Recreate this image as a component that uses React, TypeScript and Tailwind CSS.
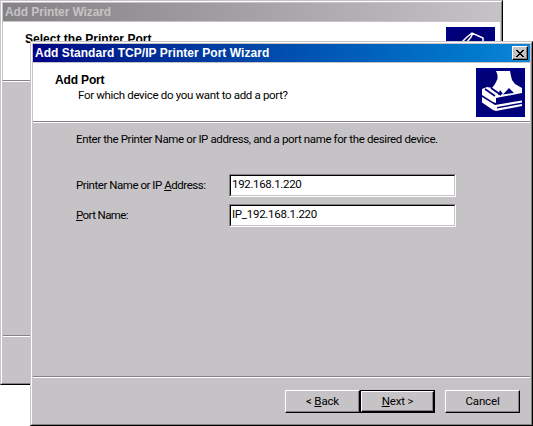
import React from "react";

type WindowProps = {
  title: string;
  heading: string;
  headingSpacing: string;
  titleSpacing: string;
  active?: boolean;
  icon: React.ReactNode;
  subtitle?: string;
  children?: React.ReactNode;
  footer?: React.ReactNode;
};

function StampIcon() {
  return (
    <svg width="49" height="49" viewBox="0 0 49 49" className="block">
      <defs>
        <pattern id="dots" width="2" height="2" patternUnits="userSpaceOnUse">
          <rect width="2" height="2" fill="#00007e" />
          <rect width="1" height="1" fill="#000066" />
        </pattern>
      </defs>
      <rect width="49" height="49" fill="#000084" />
      <rect x="3" y="3" width="43" height="43" fill="url(#dots)" />
      <path d="M20 3H34L35 8L36 12L39 16L46 20V25L20 30V35L17 34L6 27V21L11 19L16 20L19 16L21.5 11L21.5 7Z" fill="#fff" />
      <path d="M33 20L38 25L27 26.5Z M24 22L27 26L22 27Z" fill="#00007b" />
      <path d="M9 21L19 28M15 20L25 27" stroke="#00007b" strokeWidth="1.7" />
      <path d="M6 29L19 37L46 32.5V34.5L21 39V40.5L46 36V38L20 43L17 42L6 34.5Z" fill="#fff" />
    </svg>
  );
}

function PrinterIcon() {
  return (
    <svg width="49" height="49" viewBox="0 0 49 49" className="block">
      <rect width="49" height="49" fill="#000084" />
      <rect x="3" y="3" width="43" height="43" fill="url(#dots)" />
      <path d="M16 15L21 10L26 6L37 11V16M27 6L25 10L20 16" fill="none" stroke="#fff" strokeWidth="1.5" />
    </svg>
  );
}

function WizardWindow({ title, heading, headingSpacing, titleSpacing, active, icon, subtitle, children, footer }: WindowProps) {
  return (
    <div className="h-[385px] w-[503px] border border-t-[#c6c3c6] border-l-[#c6c3c6] border-r-black border-b-black bg-[#c6c3c6]">
      <div className="flex h-full flex-col border border-t-white border-l-white border-r-[#848284] border-b-[#848284] p-px">
        <div className={`flex h-[18px] shrink-0 items-center justify-between pr-0.5 pl-0.5 font-['Liberation_Sans',Arial,sans-serif] text-[12px] font-bold ${active ? "bg-linear-to-r from-[#000084] to-[#1086d6] text-white" : "bg-linear-to-r from-[#848284] to-[#c6c3c6] text-[#c6c3c6]"}`}>
          <span className={`whitespace-nowrap ${titleSpacing}`}>{title}</span>
          {active && (
            <button className="flex h-[14px] w-4 items-center justify-center border border-t-white border-l-white border-r-black border-b-black bg-[#c6c3c6] shadow-[inset_-1px_-1px_0_#848284]">
              <svg width="8" height="7" viewBox="0 0 8 7" shapeRendering="crispEdges">
                <path d="M0 0h2v1h1v1h2v-1h1v-1h2v1h-1v1h-1v1h-1v1h1v1h1v1h1v1h-2v-1h-1v-1h-2v1h-1v1h-2v-1h1v-1h1v-1h1v-1h-1v-1h-1v-1h-1z" fill="#000" />
              </svg>
            </button>
          )}
        </div>
        <div className="mt-px flex h-[58px] shrink-0 justify-between bg-white pt-[5px] pr-[5px] pl-[22px]">
          <div className="pt-[5px]">
            <div className={`h-[15px] font-['Liberation_Sans',Arial,sans-serif] text-[12px] leading-[15px] font-bold whitespace-nowrap ${headingSpacing}`}>{heading}</div>
            <div className="h-[15px] pl-[23px] leading-[15px] tracking-[-0.33px] whitespace-nowrap">{subtitle}</div>
          </div>
          {icon}
        </div>
        <div className="h-0.5 shrink-0 border-t border-b border-t-[#848284] border-b-white" />
        <div className="min-h-0 flex-1">{children}</div>
        <div className="h-0.5 shrink-0 border-t border-b border-t-[#848284] border-b-white" />
        <div className="flex h-[45px] shrink-0 pt-3 pl-[252px]">{footer}</div>
      </div>
    </div>
  );
}

function WizardButton({ children, primary, className = "" }: { children: React.ReactNode; primary?: boolean; className?: string }) {
  return (
    <button className={`h-[23px] w-[75px] tracking-[-0.15px] ${primary ? "border border-black leading-[18px]" : "leading-[20px]"} ${className}`}>
      <span className="block h-full border border-t-white border-l-white border-r-black border-b-black shadow-[inset_-1px_-1px_0_#848284]">{children}</span>
    </button>
  );
}

function Field({ label, value, labelSpacing, valueSpacing }: { label: React.ReactNode; value: string; labelSpacing: string; valueSpacing: string }) {
  return (
    <label className="flex h-[23px] items-center">
      <span className={`w-[153px] whitespace-nowrap ${labelSpacing}`}>{label}</span>
      <span className="h-[23px] w-[227px] border border-t-[#848284] border-l-[#848284] border-r-white border-b-white">
        <span className={`block h-full border border-t-black border-l-black border-r-[#c6c3c6] border-b-[#c6c3c6] bg-white pl-px leading-[17px] ${valueSpacing}`}>{value}</span>
      </span>
    </label>
  );
}

export default function App() {
  return (
    <div className="relative h-[426px] w-[533px] overflow-hidden bg-white font-[Roboto,'Liberation_Sans',sans-serif] text-[11.5px] text-black">
      <WizardWindow title="Add Printer Wizard" titleSpacing="tracking-[-0.1px]" heading="Select the Printer Port" headingSpacing="tracking-[0.02px]" icon={<PrinterIcon />} />
      <div className="absolute top-[41px] left-[30px]">
        <WizardWindow
          active
          title="Add Standard TCP/IP Printer Port Wizard"
          titleSpacing="tracking-[0.05px]"
          heading="Add Port"
          headingSpacing="tracking-[-0.15px]"
          subtitle="For which device do you want to add a port?"
          icon={<StampIcon />}
          footer={
            <>
              <WizardButton>&lt; <u>B</u>ack</WizardButton>
              <WizardButton primary><u>N</u>ext &gt;</WizardButton>
              <WizardButton className="ml-2.5">Cancel</WizardButton>
            </>
          }
        >
          <div className="pt-[9px] pl-[43px]">
            <p className="h-[42px] leading-[15px] tracking-[-0.38px] whitespace-nowrap">Enter the Printer Name or IP address, and a port name for the desired device.</p>
            <div className="flex flex-col gap-[7px]">
              <Field label={<>Printer Name or IP <u>A</u>ddress:</>} value="192.168.1.220" labelSpacing="tracking-[-0.46px]" valueSpacing="tracking-[-0.33px]" />
              <Field label={<><u>P</u>ort Name:</>} value="IP_192.168.1.220" labelSpacing="tracking-[-0.6px]" valueSpacing="tracking-[-0.27px]" />
            </div>
          </div>
        </WizardWindow>
      </div>
    </div>
  );
}
